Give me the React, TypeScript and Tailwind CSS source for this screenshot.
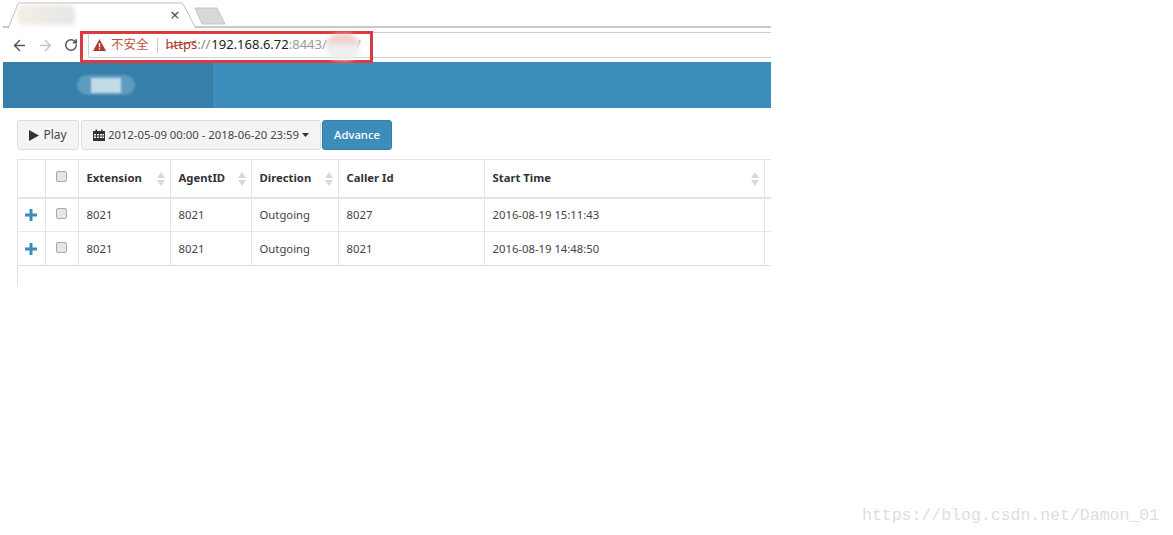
import { ArrowLeft, ArrowRight, RotateCw } from "lucide-react";

const rows = [
  { ext: "8021", agent: "8021", dir: "Outgoing", caller: "8027", start: "2016-08-19 15:11:43" },
  { ext: "8021", agent: "8021", dir: "Outgoing", caller: "8021", start: "2016-08-19 14:48:50" },
];

function SortIcon() {
  return (
    <svg width="8" height="14" viewBox="0 0 8 14" className="shrink-0">
      <path d="M4 0 L8 6 L0 6 Z" fill="#d5d8dc" />
      <path d="M4 14 L8 8 L0 8 Z" fill="#d5d8dc" />
    </svg>
  );
}

function Check() {
  return (
    <span className="block w-[11px] h-[11px] rounded-[2px] border border-[#a9a9a9] bg-[#e6e6e6]" />
  );
}

function HeadCell({ label, sort = true }: { label: string; sort?: boolean }) {
  return (
    <th className="border-r border-[#e4e4e4] pl-2 pr-[5px] pt-[1px] text-left font-bold">
      <div className="flex items-center justify-between">
        <span>{label}</span>
        {sort && <SortIcon />}
      </div>
    </th>
  );
}

function PlusIcon() {
  return (
    <svg width="12" height="12" viewBox="0 0 12 12" className="mx-auto block">
      <path d="M4.500 0h3v4.500h4.500v3H7.500v4.500h-3V7.500H0v-3h4.500z" fill="#3c8dbc" />
    </svg>
  );
}

export default function App() {
  return (
    <div
      className="relative w-[1173px] h-[535px] overflow-hidden bg-white"
      style={{ fontFamily: '"Noto Sans", "Noto Sans CJK SC", sans-serif' }}
    >
      <div className="w-[768px] ml-[3px] h-[287px] overflow-hidden">
        {/* tab strip */}
        <div className="relative h-[28px] border-b-[2px] border-[#c9c9c9]">
          <svg width="240" height="29" viewBox="0 0 240 29" className="absolute left-0 top-0">
            <path d="M5 28.500 L15 4 Q15.500 3 17 3 L178 3 Q179.500 3 180 4 L193 28.500" fill="#fff" stroke="#bdbdbd" />
            <path d="M192 8 L214 8 L222 24 L199 24 Z" fill="#d8d8d8" stroke="#c6c6c6" />
          </svg>
          <div className="absolute left-[14px] top-[5px] w-[58px] h-[20px] rounded-[6px] bg-[linear-gradient(90deg,#f4eee6,#e6e6e6)] blur-[2px]" />
          <span className="absolute left-[167px] top-[5px] text-[17px] leading-[20px] text-[#555]">×</span>
        </div>

        {/* address bar */}
        <div className="h-[34px] flex items-center bg-white">
          <ArrowLeft size={17} strokeWidth={2} className="ml-[8px] text-[#555]" />
          <ArrowRight size={17} strokeWidth={2} className="ml-[9px] text-[#c4c4c4]" />
          <RotateCw size={14} strokeWidth={2.6} className="ml-[10px] text-[#555]" />
          <div className="ml-[10px] flex-1 h-[26px] border border-[#cfcfcf] rounded-l-[2px] border-r-0 flex items-center pl-[4px] text-[13px]">
            <svg width="13" height="12" viewBox="0 0 13 12">
              <path d="M6.500 0 L13 12 L0 12 Z" fill="#b5392c" />
              <path d="M5.800 4h1.400v4.300h-1.400zM5.800 9.200h1.400v1.400h-1.400z" fill="#fff" />
            </svg>
            <span className="ml-[5px] text-[12.500px] text-[#c0503f]">不安全</span>
            <span className="ml-[8px] w-px h-[15px] bg-[#c8c8c8]" />
            <span className="ml-[8px] relative text-[#a8392c]">
              https
              <svg width="33" height="10" viewBox="0 0 33 10" className="absolute left-0 top-[5px]">
                <path d="M0 8 L30 1" stroke="#b5392c" strokeWidth="1.200" fill="none" />
              </svg>
            </span>
            <span className="text-[#888]">://</span>
            <span className="ml-[1px] text-[#222]">192.168.6.72</span>
            <span className="text-[#999]">:8443/</span>
            <span className="ml-[29px] text-[#999]">/</span>
          </div>
        </div>

        {/* app header */}
        <div className="h-[46px] flex bg-[#3c8dbc]">
          <div className="w-[210px] bg-[#367fa9] flex items-center pl-[74px]">
            <div className="w-[58px] h-[20px] rounded-full bg-[#5d9cc0] blur-[1px] flex items-center justify-center">
              <span className="w-[30px] h-[15px] bg-[#c2dbe8]" />
            </div>
          </div>
        </div>

        {/* content */}
        <div className="pl-[14px] pt-[12px] text-[11.300px] text-[#444]">
          <div className="flex gap-[2px] h-[30px]">
            <button className="w-[62px] flex items-center justify-center gap-[4px] rounded-[3px] border border-[#ddd] bg-[#f4f4f4] text-[12px] text-[#444]">
              <svg width="10" height="11" viewBox="0 0 10 11">
                <path d="M0 0 L10 5.500 L0 11 Z" fill="#333" />
              </svg>
              Play
            </button>
            <button className="w-[240px] flex items-center justify-center gap-[3px] rounded-[3px] border border-[#ddd] bg-[#f4f4f4] text-[#444]">
              <svg width="12" height="12" viewBox="0 0 12 12">
                <path
                  d="M0 2h2.500V0.500h1.500V2h4V0.500h1.500V2H12v10H0z M1 5v1.500h2V5z M4 5v1.500h2V5z M7 5v1.500h2V5z M9.500 5v1.500h1.500V5z M1 7.500V9h2V7.500z M4 7.500V9h2V7.500z M7 7.500V9h2V7.500z M9.500 7.500V9h1.500V7.500z"
                  fill="#333"
                  fillRule="evenodd"
                />
              </svg>
              <span>2012-05-09 00:00 - 2018-06-20 23:59</span>
              <svg width="7" height="4" viewBox="0 0 7 4">
                <path d="M0 0 L7 0 L3.500 4 Z" fill="#333" />
              </svg>
            </button>
            <button className="w-[70px] -ml-[1px] rounded-[3px] border border-[#367fa9] bg-[#3c8dbc] text-white font-medium">
              Advance
            </button>
          </div>

          <div className="mt-[9px] h-[127px] border-l border-[#e4e4e4]">
            <table className="table-fixed border-collapse w-[753px]">
              <colgroup>
                <col className="w-[27px]" />
                <col className="w-[33px]" />
                <col className="w-[92px]" />
                <col className="w-[81px]" />
                <col className="w-[87px]" />
                <col className="w-[146px]" />
                <col className="w-[280px]" />
                <col />
              </colgroup>
              <thead>
                <tr className="h-[38px] border-t border-b-[2px] border-[#e4e4e4] text-[#333]">
                  <th className="border-r border-[#e4e4e4]" />
                  <th className="border-r border-[#e4e4e4]">
                    <div className="flex justify-center -mt-[3px]">
                      <Check />
                    </div>
                  </th>
                  <HeadCell label="Extension" />
                  <HeadCell label="AgentID" />
                  <HeadCell label="Direction" />
                  <HeadCell label="Caller Id" sort={false} />
                  <HeadCell label="Start Time" />
                  <th />
                </tr>
              </thead>
              <tbody>
                {rows.map((r, i) => (
                  <tr key={i} className="h-[34px] border-b border-[#e9e9e9] last:border-[#dcdcdc]">
                    <td className="border-r border-[#e4e4e4]">
                      <PlusIcon />
                    </td>
                    <td className="border-r border-[#e4e4e4]">
                      <div className="flex justify-center -mt-[3px]">
                        <Check />
                      </div>
                    </td>
                    <td className="border-r border-[#e4e4e4] px-2 pt-[2px]">{r.ext}</td>
                    <td className="border-r border-[#e4e4e4] px-2 pt-[2px]">{r.agent}</td>
                    <td className="border-r border-[#e4e4e4] px-2 pt-[2px]">{r.dir}</td>
                    <td className="border-r border-[#e4e4e4] px-2 pt-[2px]">{r.caller}</td>
                    <td className="border-r border-[#e4e4e4] px-2 pt-[2px]">{r.start}</td>
                    <td />
                  </tr>
                ))}
              </tbody>
            </table>
          </div>
        </div>
      </div>

      {/* red annotation drawn on top of the screenshot */}
      <div className="absolute left-[80px] top-[31px] w-[293px] h-[32px] border-[3px] border-[#dc3a3e]" />
      <div className="absolute left-[326px] top-[34px] w-[34px] h-[26px] rounded-full bg-[linear-gradient(180deg,#f3cfcf_0%,#f3cfcf_30%,#eeeeee_45%)] blur-[2px]" />

      <div
        className="absolute left-[862px] top-[506px] text-[16.500px] leading-[20px] text-[#dedede] whitespace-pre"
        style={{ fontFamily: '"Liberation Mono", monospace' }}
      >
        https://blog.csdn.net/Damon_01
      </div>
    </div>
  );
}
